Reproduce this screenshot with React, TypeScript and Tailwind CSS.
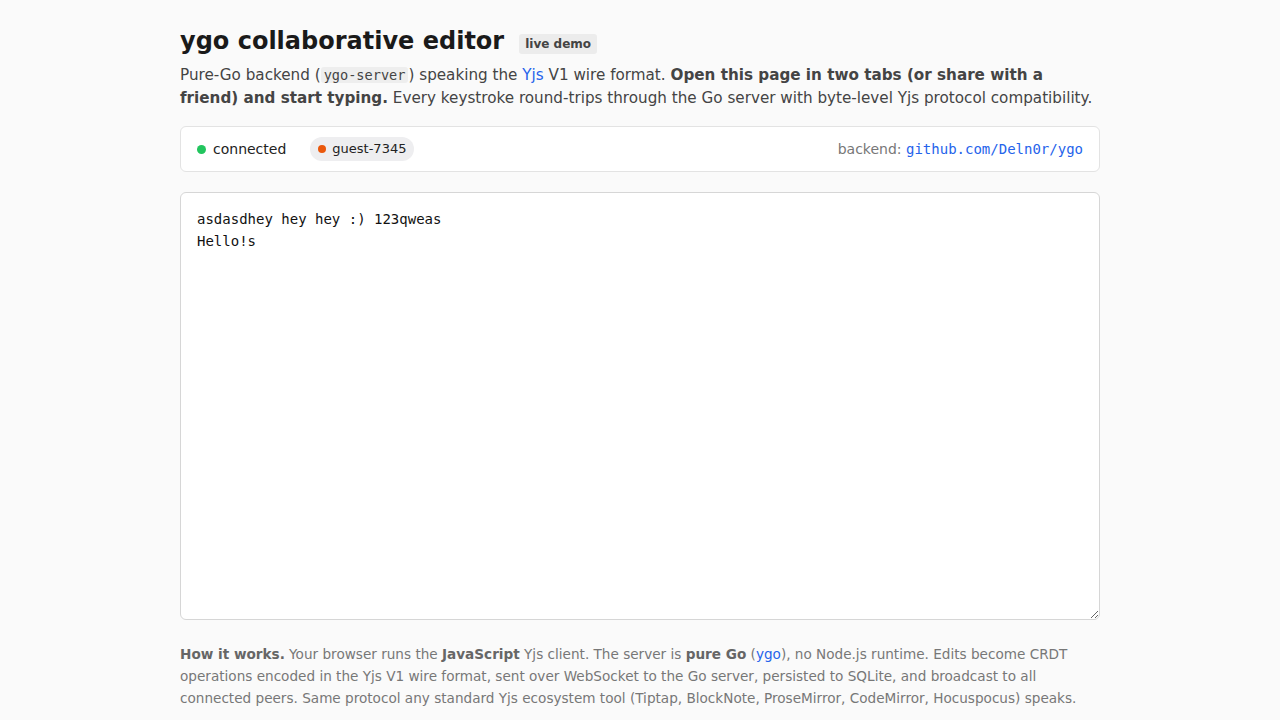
export default function App() {
  return (
    <div className="min-h-screen bg-[#fafafa] text-[#222] font-['DejaVu_Sans',sans-serif]">
      <div className="mx-auto w-[920px] pt-[24px]">
        <div className="flex items-center gap-[15px]">
          <h1 className="text-[24px] font-bold leading-[34px] text-[#1a1a1a]">ygo collaborative editor</h1>
          <span className="mt-[6px] rounded-[3px] bg-[#ececec] px-[6px] py-[1px] text-[12px] font-bold text-[#444]">live demo</span>
        </div>
        <p className="mt-[6px] text-[15.2px] leading-[23px] text-[#444]">
          Pure-Go backend (<code className="rounded-[3px] bg-[#eeeeee] px-[3px] font-['DejaVu_Sans_Mono',monospace] text-[13.6px]">ygo-server</code>) speaking the{" "}
          <a className="text-[#2563eb]">Yjs</a> V1 wire format.{" "}
          <b>Open this page in two tabs (or share with a friend) and start typing.</b> Every keystroke round-trips through the Go server with byte-level Yjs protocol compatibility.
        </p>
        <div className="mt-[16px] flex h-[46px] items-center justify-between rounded-[6px] border border-[#e3e3e3] bg-white px-[16px]">
          <div className="flex items-center">
            <span className="h-[9px] w-[9px] rounded-full bg-[#22c55e]" />
            <span className="ml-[7px] text-[14px] text-[#222]">connected</span>
            <span className="ml-[24px] flex h-[24px] items-center rounded-full bg-[#eeeef0] px-[8px] text-[13px] text-[#222]">
              <span className="h-[8px] w-[8px] rounded-full bg-[#ea580c]" />
              <span className="ml-[6px]">guest-7345</span>
            </span>
          </div>
          <div className="text-[14px] text-[#777]">
            backend: <a className="font-['DejaVu_Sans_Mono',monospace] text-[#2563eb]">github.com/Deln0r/ygo</a>
          </div>
        </div>
        <textarea
          className="mt-[20px] block h-[428px] w-full rounded-[6px] border border-[#d6d6d6] bg-white px-[16px] pt-[15px] font-['DejaVu_Sans_Mono',monospace] text-[14px] leading-[22px] text-[#111] outline-none"
          defaultValue={"asdasdhey hey hey :) 123qweas\nHello!s"}
        />
        <p className="mt-[23px] text-[13.6px] leading-[22px] text-[#777]">
          <b className="text-[#666]">How it works.</b> Your browser runs the <b className="text-[#666]">JavaScript</b> Yjs client. The server is{" "}
          <b className="text-[#666]">pure Go</b> (<a className="text-[#2563eb]">ygo</a>), no Node.js runtime. Edits become CRDT operations encoded in the Yjs V1 wire format, sent over WebSocket to the Go server, persisted to SQLite, and broadcast to all connected peers. Same protocol any standard Yjs ecosystem tool (Tiptap, BlockNote, ProseMirror, CodeMirror, Hocuspocus) speaks.
        </p>
      </div>
    </div>
  );
}
